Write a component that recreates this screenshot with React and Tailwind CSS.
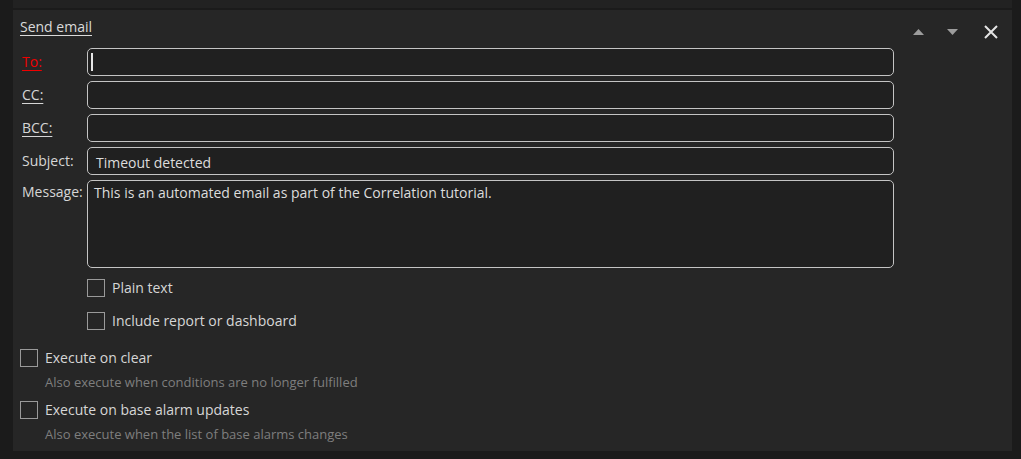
import React from "react"

const font = { fontFamily: "'Open Sans', 'Noto Sans', sans-serif" }

const Field = ({ label, red, underline, children, tall }) => (
  <div className="flex">
    <div
      className={`w-[67px] shrink-0 text-[14px] ${tall ? "pt-[1px] leading-[22px]" : "leading-[28px]"} ${red ? "text-[#f00000]" : "text-[#d6d6d6]"} ${underline ? "underline underline-offset-[3px]" : ""} pl-[2px]`}
    >
      {label}
    </div>
    {children}
  </div>
)

const Input = ({ value, cursor, tall }) => (
  <div
    className={`w-[807px] ${tall ? "h-[88px] pl-[6px] pt-[1px] items-start" : "h-[28px] pl-[8px] pt-[3px] items-center"} flex rounded-[5px] border border-[#c4c4c4] bg-[#202020] text-[14px] text-[#dcdcdc] leading-[22px]`}
  >
    {cursor && <span className="w-[2px] h-[18px] bg-[#e6e6e6] -ml-[5px] -mt-[3px]"></span>}
    {value}
  </div>
)

const Check = ({ label, hint }) => (
  <div>
    <div className="flex items-center gap-[7px] h-[18px]">
      <div className="w-[18px] h-[18px] border border-[#9a9a9a] bg-[#262626]"></div>
      <span className="text-[14px] text-[#d6d6d6] leading-[18px]">{label}</span>
    </div>
    {hint && (
      <div className="pl-[25px] mt-[7px] text-[13px] leading-[16px] text-[#7e7e7e]">{hint}</div>
    )}
  </div>
)

export default function App() {
  return (
    <div className="w-[1021px] h-[459px] bg-[#1b1b1b] overflow-hidden" style={font}>
      <div className="ml-[13px] mr-[9px] h-[8px] bg-[#222222]"></div>
      <div className="ml-[13px] mr-[9px] mt-[2px] h-[441px] bg-[#262626] pl-[7px] pt-[6px]">
        {/* header */}
        <div className="flex h-[22px]">
          <span className="text-[14px] leading-[22px] text-[#dadada] underline underline-offset-[3px]">
            Send email
          </span>
          <div className="ml-auto flex items-start pt-[9px] pr-[14px]">
            <svg width="11" height="6" viewBox="0 0 11 6" className="mt-[4px]">
              <polygon points="0,6 5.5,0 11,6" fill="#9c9c9c" />
            </svg>
            <svg width="11" height="6" viewBox="0 0 11 6" className="ml-[23px] mt-[4px]">
              <polygon points="0,0 11,0 5.5,6" fill="#9c9c9c" />
            </svg>
            <svg width="14" height="14" viewBox="0 0 14 14" className="ml-[26px]">
              <path d="M1 1L13 13M13 1L1 13" stroke="#e4e4e4" strokeWidth="2" />
            </svg>
          </div>
        </div>

        {/* fields */}
        <div className="mt-[10px] flex flex-col gap-[5px]">
          <Field label="To:" red underline>
            <Input cursor />
          </Field>
          <Field label="CC:" underline>
            <Input />
          </Field>
          <Field label="BCC:" underline>
            <Input />
          </Field>
          <Field label="Subject:">
            <Input value="Timeout detected" />
          </Field>
          <Field label="Message:" tall>
            <Input tall value="This is an automated email as part of the Correlation tutorial." />
          </Field>
        </div>

        <div className="pl-[67px] mt-[11px]">
          <Check label="Plain text" />
          <div className="mt-[15px]">
            <Check label="Include report or dashboard" />
          </div>
        </div>

        <div className="mt-[19px]">
          <Check label="Execute on clear" hint="Also execute when conditions are no longer fulfilled" />
        </div>
        <div className="mt-[11px]">
          <Check label="Execute on base alarm updates" hint="Also execute when the list of base alarms changes" />
        </div>
      </div>
    </div>
  )
}
